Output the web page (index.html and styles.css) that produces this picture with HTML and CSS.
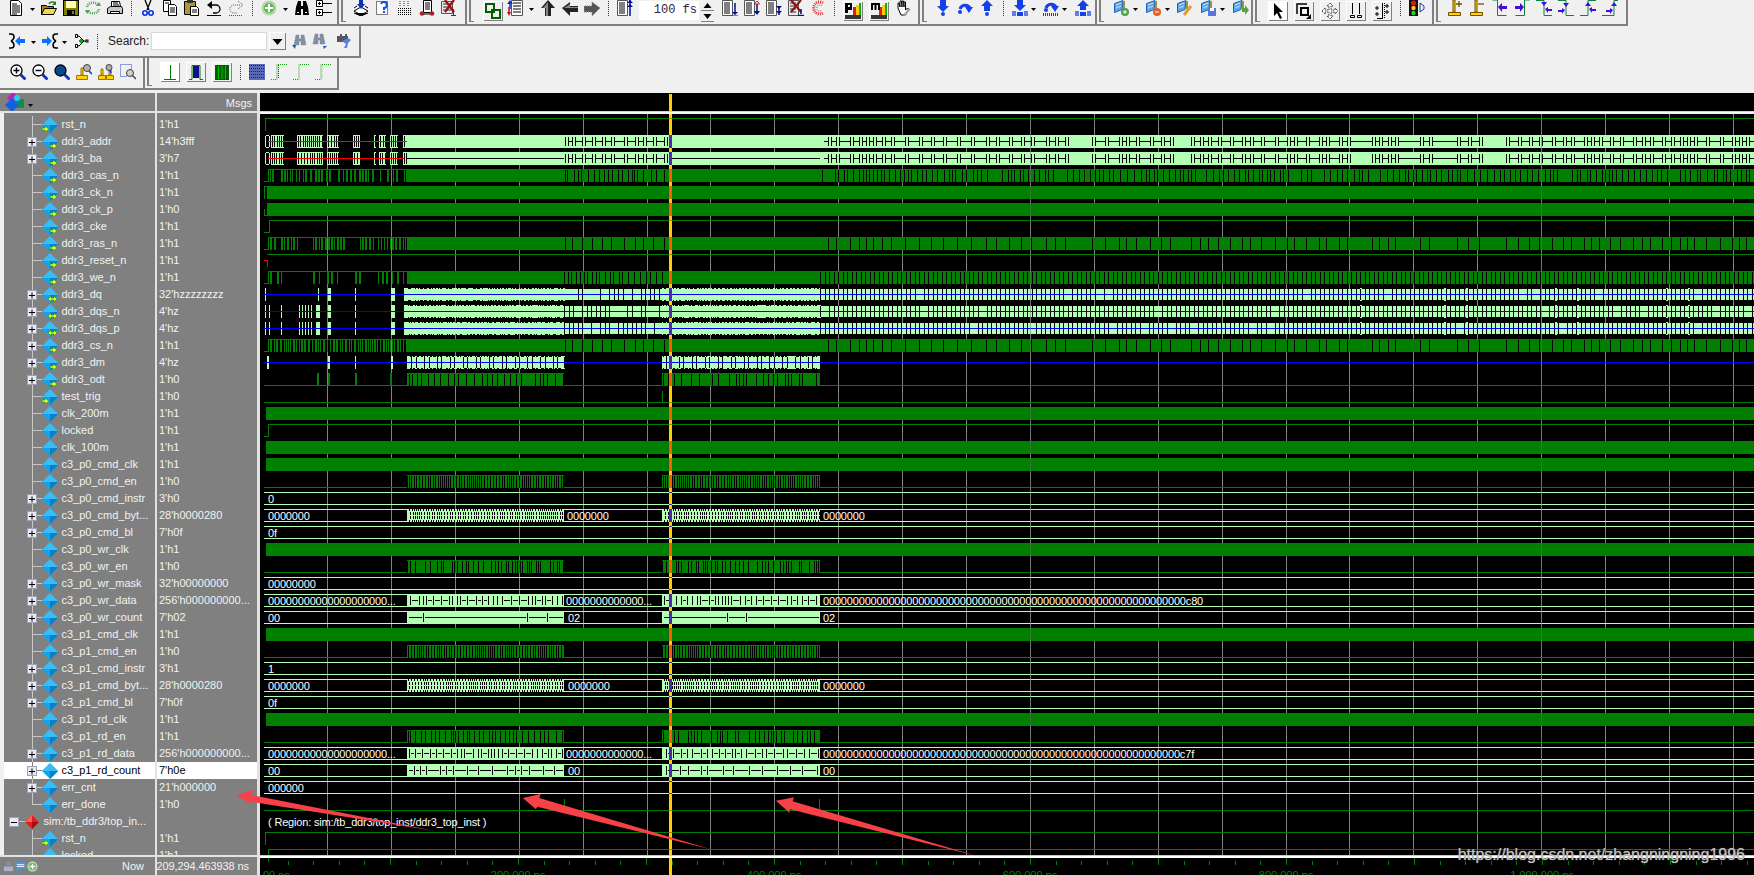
FILE: index.html
```html
<!DOCTYPE html>
<html lang="en">
<head>
<meta charset="utf-8">
<title>Wave</title>
<link rel="stylesheet" href="styles.css">
</head>
<body>
<svg class="defs" aria-hidden="true">
<defs>
<symbol id="doc" viewBox="0 0 16 16"><path fill="#fff" stroke="#000" d="M2.5.5h8l3 3v12h-11z"/><path stroke="#000" d="M4 4h5M4 6h8M4 8h8M4 10h8M4 12h8M4 14h5"/></symbol>
<symbol id="open" viewBox="0 0 16 16"><path fill="#a08a20" stroke="#000" d="M.5 14.5v-9h5l1 1h6v8z"/><path fill="#f0d850" stroke="#000" d="M.5 14.5l3-6h12l-3 6z"/><path fill="none" stroke="#208020" stroke-width="1.5" d="M8 4c1-2 4-3 6-1"/><path fill="#208020" d="M15 1v4h-4z"/></symbol>
<symbol id="save" viewBox="0 0 16 16"><rect x=".5" y=".5" width="15" height="15" fill="#808000" stroke="#000"/><rect x="3" y="1" width="10" height="7" fill="#ffffb0"/><rect x="4" y="10" width="8" height="5" fill="#000"/><rect x="9" y="11" width="2" height="3" fill="#808000"/></symbol>
<symbol id="reload" viewBox="0 0 16 16"><g fill="none" stroke="#5aa05a" stroke-width="2.5" stroke-dasharray="1 1"><path d="M2 7a6 5 0 0 1 11-2"/><path d="M14 9a6 5 0 0 1-11 2"/></g><path fill="#5aa05a" d="M11 6h5l-2-4zM5 10H0l2 4z"/></symbol>
<symbol id="print" viewBox="0 0 16 16"><path fill="#fff" stroke="#000" d="M4.5 1.5h8l1 5h-9z"/><path stroke="#000" d="M6 3h5M6 5h6"/><path fill="#c8c8c8" stroke="#000" d="M.5 8.5l3-2h11l1 2v5h-15z"/><path fill="#fff" stroke="#000" d="M3.5 11.5h9v2h-9z"/></symbol>
<symbol id="cut" viewBox="0 0 16 16"><path stroke="#000" stroke-width="1.3" d="M5 0l4 10M11 0L7 10"/><g fill="none" stroke="#1030e0" stroke-width="1.6"><circle cx="5" cy="13" r="2.2"/><circle cx="11" cy="13" r="2.2"/></g></symbol>
<symbol id="copy" viewBox="0 0 16 16"><path fill="#fff" stroke="#000" d="M1.5.5h7v11h-7z"/><path fill="#fff" stroke="#000" d="M6.5 4.5h6l2 2v9h-8z"/><path stroke="#000" d="M3 3h4M8 8h5M8 10h5M8 12h5"/></symbol>
<symbol id="paste" viewBox="0 0 16 16"><path fill="#b09830" stroke="#000" d="M.5 1.5h11v13H.5z"/><rect x="3" y="0" width="6" height="3" fill="#333"/><path fill="#fff" stroke="#000" d="M6.5 6.5h6l2 2v7h-8z"/><path stroke="#000" d="M8 10h5M8 12h5"/></symbol>
<symbol id="undo" viewBox="0 0 16 16"><path fill="none" stroke="#000" stroke-width="1.3" d="M4 5h6a4 4 0 0 1 0 8H7"/><path d="M6 1v8L1 5z"/><path stroke="#000" d="M1 15.500h14"/></symbol>
<symbol id="redo" viewBox="0 0 16 16"><g fill="none" stroke="#555" stroke-dasharray="1 1"><path d="M12 5H6a4 4 0 0 0 0 8h3"/><path d="M10 1l5 4-5 4M1 15.500h14"/></g></symbol>
<symbol id="add" viewBox="0 0 16 16"><circle cx="8" cy="8" r="7.500" fill="#b0d8a0"/><circle cx="8" cy="8" r="5" fill="#60b060"/><path stroke="#fff" stroke-width="2" d="M4 8h8M8 4v8"/></symbol>
<symbol id="bino" viewBox="0 0 16 16"><path d="M1 15l1-8 2-6h3v5h2V1h3l2 6 1 8H9V9H7v6z"/><path fill="#fff" d="M3 12h2v1H3zM11 12h2v1h-2z"/></symbol>
<symbol id="tree" viewBox="0 0 16 16"><path fill="#fff" stroke="#000" d="M.5.500h6v6h-6zM.5 9.500h6v6h-6z"/><path stroke="#000" d="M2 3.500h3M3.500 2v3M2 12.500h3M3.500 11v3M7 3.500h9M7 12.500h9"/></symbol>
<symbol id="stk" viewBox="0 0 16 16"><path fill="#fff" stroke="#000" d="M1 11l7-4 7 4-7 4zM1 8l3-2M15 8l-3-2"/><path stroke="#000" d="M1 13l7 3 7-3"/><path fill="#1030c0" d="M6 0h4v4h2l-4 5-4-5h2z"/></symbol>
<symbol id="qdoc" viewBox="0 0 16 16"><path fill="#fff" stroke="#000" stroke-dasharray="1 1" d="M1.500 1.500h11v13h-11z"/><path fill="none" stroke="#1050e0" stroke-width="2" d="M6 4a3 3 0 1 1 3 4v2M9 11v2"/></symbol>
<symbol id="grd" viewBox="0 0 16 16"><path stroke="#000" stroke-dasharray="1 1" d="M1 8.500h14M1 10.500h14M1 12.500h14M1 14.500h14"/><path fill="none" stroke="#1030c0" stroke-dasharray="1 1" d="M3 1v5M7 1v5M11 1v5"/></symbol>
<symbol id="cart" viewBox="0 0 16 16"><path fill="#fff" stroke="#000" d="M4.500.500h8v12h-8z"/><path stroke="#000" d="M6 3h5M6 5h5M6 7h5M6 9h5M3 14h10"/><circle cx="3" cy="13.500" r="2.300" fill="#b02020"/><circle cx="13" cy="13.500" r="2.300" fill="#b02020"/></symbol>
<symbol id="xdoc" viewBox="0 0 16 16"><path fill="#e8e8e8" stroke="#555" d="M.5 1.500h11v12H.5z"/><path stroke="#333" d="M2 4h8M2 7h8M2 10h8"/><path stroke="#a01010" stroke-width="2.300" d="M4 0l9 12M13 0L4 12"/><path stroke="#1030c0" d="M12.500 9v6M10 15.500h5"/></symbol>
<symbol id="link" viewBox="0 0 16 16"><g fill="none" stroke="#006000" stroke-width="2"><rect x="1" y="1" width="8" height="8"/><rect x="7" y="7" width="8" height="8"/></g></symbol>
<symbol id="rb" viewBox="0 0 16 16"><path fill="#fff" stroke="#555" d="M4.500.5h11v15h-11z"/><path stroke="#000" d="M6 3h8M6 6h8M6 9h8M6 12h8"/><path fill="none" stroke="#1030c0" stroke-width="1.500" d="M3 9V3"/><path fill="#1030c0" d="M0 4l3-4 3 4z"/><path fill="none" stroke="#c01010" stroke-width="1.500" d="M2 7v7"/><path fill="#c01010" d="M0 12h4l-2 4z"/></symbol>
<symbol id="aup" viewBox="0 0 16 16"><path fill="#222" d="M8 0l7 8h-4v8H5V8H1z"/><path fill="#888" d="M8 2L3 8h3v8h2z"/></symbol>
<symbol id="alf" viewBox="0 0 16 16"><path fill="#222" d="M0 8l8-6v4h8v6H8v4z"/><path fill="#888" d="M2 8l6-4v3h8v1z"/></symbol>
<symbol id="art" viewBox="0 0 16 16"><path fill="#555" stroke="#888" stroke-dasharray="1 1" d="M16 8L8 2v4H0v6h8v4z"/></symbol>
<symbol id="db" viewBox="0 0 16 16"><path fill="#fff" stroke="#555" d="M.5.5h10v15H.5z"/><path stroke="#000" d="M2 3h6M2 5h6M2 7h6M2 9h6M2 11h6M2 13h6"/><path stroke="#00108a" stroke-width="1.500" d="M13 0v16"/><path fill="#00108a" d="M10 3l3-3 3 3zM10 7l3-3 3 3z"/></symbol>
<symbol id="dd" viewBox="0 0 16 16"><path fill="#fff" stroke="#555" d="M.5.5h10v15H.5z"/><path stroke="#000" d="M2 3h6M2 5h6M2 7h6M2 9h6M2 11h6M2 13h6"/><path stroke="#00108a" stroke-width="1.500" d="M13 3v10"/><path fill="#00108a" d="M10 12h6l-3 3zM10 15.500h6v.5h-6z"/></symbol>
<symbol id="du" viewBox="0 0 16 16"><path fill="#fff" stroke="#555" d="M.5.5h10v15H.5z"/><path stroke="#000" d="M2 3h6M2 5h6M2 7h6M2 9h6M2 11h6M2 13h6"/><path stroke="#00108a" stroke-width="1.500" d="M13 4v9"/><path fill="#00108a" d="M10 11h6l-3 4z"/><path fill="#fff" stroke="#c02020" d="M10.500 4l2.500-3 2.500 3z"/></symbol>
<symbol id="dt" viewBox="0 0 16 16"><path fill="#fff" stroke="#555" d="M.5.5h10v15H.5z"/><path stroke="#000" d="M2 3h6M2 5h6M2 7h6M2 9h6M2 11h6M2 13h6"/><path stroke="#00108a" stroke-width="1.500" d="M13 6v9"/><path fill="#00108a" d="M10 6h6l-3 3zM10 11h6l-3 3z"/></symbol>
<symbol id="dx" viewBox="0 0 16 16"><path fill="#e8e8e8" stroke="#555" d="M.5.5h10v15H.5z"/><path stroke="#333" d="M2 3h6M2 6h6M2 9h6M2 12h6"/><path stroke="#901010" stroke-width="2" d="M3 0l10 12M13 0L3 12"/><path stroke="#00108a" stroke-width="1.500" d="M13 9v5M10 15.500h6"/></symbol>
<symbol id="cc" viewBox="0 0 16 16"><path fill="none" stroke="#e03030" stroke-width="3" stroke-dasharray="1 1" d="M13 3a6 6 0 1 0 0 10"/><path fill="none" stroke="#e03030" stroke-dasharray="1 1" d="M12 6a3 3 0 1 0 0 4"/></symbol>
<symbol id="pb" viewBox="0 0 16 16"><rect y="12" width="16" height="4" fill="#333"/><rect x="8" y="4" width="3" height="8" fill="#e02020"/><rect x="11" y="2" width="3" height="10" fill="#ffd000"/><rect x="14" y="0" width="2" height="12" fill="#10b010"/><path d="M0 0h7v7H3v3H0zM3 2v2h2V2z"/></symbol>
<symbol id="mb" viewBox="0 0 16 16"><rect y="12" width="16" height="4" fill="#333"/><rect x="8" y="4" width="3" height="8" fill="#e02020"/><rect x="11" y="2" width="3" height="10" fill="#ffd000"/><rect x="14" y="0" width="2" height="12" fill="#10b010"/><path d="M0 0h9v7H7V2H5.500v5h-2V2H2v5H0z"/></symbol>
<symbol id="hand" viewBox="0 0 16 16"><path fill="#fff" stroke="#000" d="M3 8V3h1l1 4V1h1.500l.5 6V1h1.500l.5 6V2h1.500v8l2-2 1 1-3 6H6z"/><path stroke="#9ab" stroke-width="2" d="M9 15l6-6"/></symbol>
<symbol id="sin" viewBox="0 0 16 16"><path fill="#1440e8" d="M5 0h6v6h3l-6 6-6-6h3z"/><circle cx="8" cy="14" r="2" fill="#1440e8"/></symbol>
<symbol id="sov" viewBox="0 0 16 16"><path fill="none" stroke="#1440e8" stroke-width="3" d="M3 9a5.500 5.500 0 0 1 10-1"/><path fill="#1440e8" d="M8 7h8l-4 6z"/><circle cx="3" cy="12" r="2" fill="#1440e8"/></symbol>
<symbol id="sou" viewBox="0 0 16 16"><path fill="#1440e8" d="M8 0l6 6h-3v5H5V6H2z"/><circle cx="8" cy="14" r="2" fill="#1440e8"/></symbol>
<symbol id="sinb" viewBox="0 0 16 16"><path fill="#1440e8" d="M5 0h6v5h3l-6 6-6-6h3z"/><path stroke="#1440e8" stroke-width="1.300" d="M1 11v5M3 11v5M13 11v5M15 11v5"/><circle cx="8" cy="14" r="2" fill="#1440e8"/><rect x="5" y="12" width="6" height="4" fill="#1440e8"/></symbol>
<symbol id="sovb" viewBox="0 0 16 16"><path fill="none" stroke="#1440e8" stroke-width="3" d="M3 8a5.500 5.500 0 0 1 10-1"/><path fill="#1440e8" d="M8 6h8l-4 6z"/><circle cx="3" cy="10" r="2" fill="#1440e8"/><path stroke="#1440e8" stroke-dasharray="1 1" stroke-width="3" d="M0 14.500h16"/></symbol>
<symbol id="soub" viewBox="0 0 16 16"><path fill="#1440e8" d="M8 0l6 6h-3v4H5V6H2z"/><path stroke="#1440e8" stroke-width="1.300" d="M1 11v5M3 11v5M13 11v5M15 11v5"/><rect x="5" y="12" width="6" height="4" fill="#1440e8"/></symbol>
<symbol id="wv" viewBox="0 0 16 16"><path fill="#58a8e8" stroke="#2060b0" d="M.5 3.500L9 .5l-1 9-7.500 3z"/><path stroke="#cde" d="M2 5l5-2M2 8l5-2"/><path stroke="#a09040" stroke-width="2" d="M10 1v8"/></symbol>
<symbol id="wadd" viewBox="0 0 16 16"><use href="#wv"/><circle cx="11" cy="12" r="4" fill="#50a050"/><path stroke="#fff" d="M9 12h4M11 10v4"/></symbol>
<symbol id="wdel" viewBox="0 0 16 16"><use href="#wv"/><circle cx="11" cy="12" r="4" fill="#e06020"/><path stroke="#fff" d="M9 12h4"/></symbol>
<symbol id="wed" viewBox="0 0 16 16"><use href="#wv"/><path stroke="#e0a030" stroke-width="3" d="M7 15l7-9"/></symbol>
<symbol id="wsv" viewBox="0 0 16 16"><use href="#wv"/><rect x="7" y="8" width="8" height="8" fill="#5878d8"/><rect x="9" y="8" width="4" height="3" fill="#fff"/></symbol>
<symbol id="wgo" viewBox="0 0 16 16"><use href="#wv"/><path fill="#58a040" d="M9 8h3V5l4 5-4 5v-3H9z"/></symbol>
<symbol id="ptr" viewBox="0 0 16 16"><path d="M4 0l9 9H9l3 6-2 1-3-6-3 3z"/></symbol>
<symbol id="zbx" viewBox="0 0 16 16"><path fill="none" stroke="#000" stroke-width="1.500" d="M1 11V1h10"/><rect x="5" y="5" width="7" height="7" fill="none" stroke="#000" stroke-width="2"/><path fill="#000" d="M15 11v5h-5z"/></symbol>
<symbol id="pan" viewBox="0 0 16 16"><path fill="#fff" stroke="#000" stroke-dasharray="1 1" d="M8 0l3 3H9v4h4V5l3 3-3 3V9H9v4h2l-3 3-3-3h2V9H3v2L0 8l3-3v2h4V3H5z"/></symbol>
<symbol id="mark" viewBox="0 0 16 16"><path stroke="#000" d="M4.500 0v11M11.500 0v11"/><path fill="none" stroke="#000" d="M2.500 12.500h4v2h-4zM9.500 12.500h4v2h-4z"/></symbol>
<symbol id="mks" viewBox="0 0 16 16"><path fill="none" stroke="#000" d="M8.500 0v15M3 15.500h6"/><path stroke="#000" d="M1 5h4M3 3v4M1 11h4M3 9v4M11 3h4M13 1v4M11 9h4M13 7v4"/><path stroke="#000" stroke-dasharray="1 1" d="M10.500 0v16"/></symbol>
<symbol id="tl" viewBox="0 0 16 16"><rect x="0" width="9" height="16" fill="#111"/><circle cx="4.500" cy="3" r="2.500" fill="#f01010"/><circle cx="4.500" cy="8" r="2.200" fill="#e8d020"/><circle cx="4.500" cy="13" r="2.200" fill="#20d020"/><path fill="none" stroke="#1040a0" d="M11 3v9l4-3v-3z"/></symbol>
<symbol id="fplus" viewBox="0 0 16 16"><path fill="#ffd400" stroke="#705000" d="M.5 12.500h12v3H.5zM5 0h2v12H5z"/><path stroke="#705000" stroke-width="1.300" d="M8 4h6M11 1v6"/></symbol>
<symbol id="fminus" viewBox="0 0 16 16"><path fill="#ffd400" stroke="#705000" d="M.5 12.500h12v3H.5zM5 0h2v12H5z"/><path stroke="#705000" stroke-width="1.300" d="M8 4h6"/></symbol>
<symbol id="el" viewBox="0 0 16 16"><path fill="none" stroke="#108040" d="M.5 0h5v15.500h9"/><path fill="#4010d0" d="M6 7l4-4v3h5v3h-5v3z"/></symbol>
<symbol id="er" viewBox="0 0 16 16"><path fill="none" stroke="#108040" d="M15.500 0h-5v15.500h-9"/><path fill="#4010d0" d="M10 7L6 3v3H1v3h5v3z"/></symbol>
<symbol id="ea" viewBox="0 0 16 16"><path fill="none" stroke="#108040" d="M0 .5h8v15h8"/><path fill="#4010d0" d="M5 2h6L8 6zM9 9l3-2v2h4v2h-4v2z"/></symbol>
<symbol id="eb" viewBox="0 0 16 16"><path fill="none" stroke="#108040" d="M0 .5h8v15h8"/><path fill="#4010d0" d="M5 3h6L8 7zM7 10L4 8v2H0v2h4v2z"/></symbol>
<symbol id="ec" viewBox="0 0 16 16"><path fill="none" stroke="#108040" d="M16 .5H8v15H0"/><path fill="#4010d0" d="M5 6h6L8 2zM9 9l3-2v2h4v2h-4v2z"/></symbol>
<symbol id="ed" viewBox="0 0 16 16"><path fill="none" stroke="#108040" d="M16 .5h-4v15H0"/><path fill="#4010d0" d="M9 6h6l-3-4zM11 10L8 8v2H4v2h4v2z"/></symbol>
<symbol id="mrgi" viewBox="0 0 16 16"><path fill="none" stroke="#000" stroke-width="1.500" d="M0 1h2c4 0 4 5 0 7M0 15h2c4 0 4-5 0-7"/><path fill="#0a70ff" d="M16 6H11V3L6 8l5 5v-3h5z"/></symbol>
<symbol id="mrgo" viewBox="0 0 16 16"><path fill="none" stroke="#000" stroke-width="1.500" d="M16 1h-2c-4 0-4 5 0 7M16 15h-2c-4 0-4-5 0-7"/><path fill="#0a70ff" d="M0 6h5V3l5 5-5 5v-3H0z"/></symbol>
<symbol id="gate" viewBox="0 0 16 16"><path fill="none" stroke="#000" d="M2.500 1.500h2v3h-2zM2.500 11.500h2v3h-2zM4 3h2l5 5-5 5H4M11 8h2"/><rect x="13" y="7" width="2" height="2" fill="none" stroke="#000"/><path stroke="#10a010" stroke-width="2" d="M6 8h4M8 6v4"/></symbol>
<symbol id="fnd" viewBox="0 0 16 16"><path fill="#8090a0" stroke="#8090a0" stroke-dasharray="1 1" d="M2 12l2-10h3v4h2V2h3l2 10H9V8H7v4z"/><path fill="#2050e0" d="M0 12l3 4 1-4zM1 13h2"/></symbol>
<symbol id="fnr" viewBox="0 0 16 16"><path fill="#8090a0" stroke="#8090a0" stroke-dasharray="1 1" d="M2 11l2-10h3v4h2V1h3l2 10H9V7H7v4z"/><path fill="#2050e0" d="M16 13l-3 3-1-3z"/></symbol>
<symbol id="opt" viewBox="0 0 16 16"><path fill="#556" d="M1 3h3V1h2v2h3V1h2v2h1v6H1z"/><path fill="#5880d8" d="M6 8l6-3 3 2-3 3-1 5H8l2-4z"/></symbol>
<symbol id="zin" viewBox="0 0 16 16"><circle cx="6.500" cy="6.500" r="5.500" fill="#fff" stroke="#000" stroke-width="1.300"/><path stroke="#000" stroke-width="1.500" d="M3.500 6.500h6M6.500 3.500v6"/><path stroke="#1030c0" stroke-width="2.800" d="M10.500 10.500l5 5"/></symbol>
<symbol id="zot" viewBox="0 0 16 16"><circle cx="6.500" cy="6.500" r="5.500" fill="#fff" stroke="#000" stroke-width="1.300"/><path stroke="#000" stroke-width="1.500" d="M3.500 6.500h6"/><path stroke="#1030c0" stroke-width="2.800" d="M10.500 10.500l5 5"/></symbol>
<symbol id="zfl" viewBox="0 0 16 16"><circle cx="6.500" cy="6.500" r="5.500" fill="#0b4a8a" stroke="#000" stroke-width="1.300"/><path stroke="#1030c0" stroke-width="2.800" d="M10.500 10.500l5 5"/></symbol>
<symbol id="zm1" viewBox="0 0 16 16"><path fill="#ffd400" stroke="#a07000" d="M.5 11.500h11v4H.5zM5 4h2v7H5z"/><circle cx="11" cy="4" r="3.500" fill="#b0b0b0" stroke="#444"/><path stroke="#1030c0" stroke-width="1.500" d="M13 7l3 3"/></symbol>
<symbol id="zm2" viewBox="0 0 16 16"><path fill="#ffd400" stroke="#a07000" d="M.5 11.500h7v4h-7zM8.500 11.500h7v4h-7zM3 5h2v6H3zM11 5h2v6h-2z"/><circle cx="11" cy="3.500" r="3" fill="#b0b0b0" stroke="#444"/><path stroke="#1030c0" stroke-width="1.500" d="M12 6l1 3"/></symbol>
<symbol id="zcur" viewBox="0 0 16 16"><path fill="none" stroke="#2050c0" stroke-dasharray="1 1" d="M.5.5h11v8H7v4H.5z"/><circle cx="10" cy="9" r="3.500" fill="#d0d0d0" stroke="#444"/><path stroke="#444" stroke-width="1.500" d="M12 11l4 4"/></symbol>
<symbol id="w1" viewBox="0 0 16 16"><path stroke="#008000" d="M8.500 1v14M2 15.500h12"/></symbol>
<symbol id="w2" viewBox="0 0 16 16"><path fill="#10108a" d="M5 2h6v12H5z"/><path fill="none" stroke="#008000" d="M1 15.500h3V1.500h8v14h3"/></symbol>
<symbol id="w3" viewBox="0 0 16 16"><path fill="#006000" d="M1 1h14v15H1z"/><path stroke="#00c000" d="M4.500 2v13M8 2v13M11.500 2v13"/></symbol>
<symbol id="w4" viewBox="0 0 16 16"><path fill="#5a6ab8" d="M0 0h16v16H0z"/><path stroke="#102070" stroke-dasharray="1 1" d="M0 1.500h16M0 4.500h16M0 7.500h16M0 10.500h16M0 13.500h16"/></symbol>
<symbol id="w5" viewBox="0 0 16 16"><path fill="none" stroke="#10a010" stroke-dasharray="1 1" d="M0 15.500h6v-15h10"/><path stroke="#e8d800" stroke-dasharray="1 1" d="M5.500 1v14"/><path stroke="#1030c0" stroke-dasharray="1 1" d="M7.500 1v14"/></symbol>
<symbol id="w6" viewBox="0 0 16 16"><path fill="none" stroke="#10a010" stroke-dasharray="1 1" d="M0 15.500h6v-15h10"/></symbol>
<symbol id="w7" viewBox="0 0 16 16"><path fill="none" stroke="#10a010" stroke-dasharray="1 1" d="M0 15.500h6v-15h10"/><path stroke="#e8d800" stroke-dasharray="1 1" d="M7.500 1v14"/></symbol>
<symbol id="plus" viewBox="0 0 10 10"><rect x=".5" y=".5" width="9" height="9" fill="#e6eaf6" stroke="#a0a0b4"/><path stroke="#000" d="M2 5.500h6M5 2.500v6"/></symbol>
<symbol id="minus" viewBox="0 0 10 10"><rect x=".5" y=".5" width="9" height="9" fill="#e6eaf6" stroke="#a0a0b4"/><path stroke="#000" d="M2 5.500h6"/></symbol>
<symbol id="d" viewBox="0 0 16 16"><path fill="#10a4ec" d="M8 0l8 8-8 8-8-8z"/><path fill="#5cd0ff" d="M8 0L0 8h16z" opacity=".55"/><path fill="#0880c8" d="M8 16l8-8H8z"/></symbol>
<symbol id="d-o" viewBox="0 0 16 16"><use href="#d"/><path fill="#e8ff30" stroke="#109010" stroke-width=".6" d="M8 11h3V9l4 3-4 3v-2H8z"/></symbol>
<symbol id="d-i" viewBox="0 0 16 16"><use href="#d"/><path fill="#e8ff30" stroke="#109010" stroke-width=".6" d="M0 11h3V9l4 3-4 3v-2H0z"/></symbol>
<symbol id="d-b" viewBox="0 0 16 16"><use href="#d"/><path fill="#e8ff30" stroke="#109010" stroke-width=".6" d="M6 12l3-3v2h3V9l3 3-3 3v-2H9v2z"/></symbol>
<symbol id="dr" viewBox="0 0 16 16"><path fill="#e02020" d="M8 1l7 7-7 7-7-7z"/><path fill="#ff6050" d="M8 1L1 8h7z"/><path fill="#a01010" d="M8 15l7-7H8z"/></symbol>
<symbol id="hdi" viewBox="0 0 20 20"><path fill="#c020c0" d="M6 0l6 6-6 6-6-6z" transform="translate(2 0)"/><rect x="10" y="7" width="9" height="9" fill="#109050"/><circle cx="12" cy="6" r="3" fill="#20d0f0"/><path fill="#1060e0" d="M7 6l7 7-7 7-7-7z"/></symbol>
<symbol id="care" viewBox="0 0 5 3"><path d="M0 0h5L2.500 3z"/></symbol>
<symbol id="ft1" viewBox="0 0 12 12"><path fill="#b0b0c0" d="M1 6h10v5H1z"/><circle cx="6" cy="3" r="3" fill="#8090a0"/></symbol>
<symbol id="ft2" viewBox="0 0 12 12"><path fill="#5890d0" d="M0 1h12v8H6l-3 3V9H0z"/><path stroke="#fff" d="M2 4h8M2 6h8"/></symbol>
</defs>
</svg>

<div class="toolrow r1">
  <div class="tb t1a">
    <svg class="i"><use href="#doc"/></svg><svg class="c"><use href="#care"/></svg>
    <svg class="i"><use href="#open"/></svg><svg class="i"><use href="#save"/></svg><svg class="i"><use href="#reload"/></svg><svg class="i"><use href="#print"/></svg>
    <span class="sp"></span>
    <svg class="i"><use href="#cut"/></svg><svg class="i"><use href="#copy"/></svg><svg class="i"><use href="#paste"/></svg><svg class="i"><use href="#undo"/></svg><svg class="i"><use href="#redo"/></svg>
    <span class="sp"></span>
    <svg class="i"><use href="#add"/></svg><svg class="c"><use href="#care"/></svg><svg class="i"><use href="#bino"/></svg><svg class="i"><use href="#tree"/></svg>
  </div>
  <div class="tb h t1b">
    <svg class="i"><use href="#stk"/></svg><svg class="i"><use href="#qdoc"/></svg><svg class="i"><use href="#grd"/></svg><svg class="i"><use href="#cart"/></svg><svg class="i"><use href="#xdoc"/></svg>
  </div>
  <div class="tb h t1c">
    <svg class="i p"><use href="#link"/></svg><svg class="i"><use href="#rb"/></svg><svg class="c"><use href="#care"/></svg>
    <svg class="i"><use href="#aup"/></svg><svg class="i"><use href="#alf"/></svg><svg class="i"><use href="#art"/></svg>
    <span class="sp"></span>
    <svg class="i"><use href="#db"/></svg>
    <span class="spin">100 fs</span>
    <svg class="spb" viewBox="0 0 13 22"><path d="M6.500 3l4 5h-8zM2.500 14h8l-4 5z"/><path stroke="#808080" d="M0 10.500h13M0 21.500h13"/></svg>
    <svg class="i ml2"><use href="#dd"/></svg><svg class="i"><use href="#du"/></svg><svg class="i"><use href="#dt"/></svg><svg class="i"><use href="#dx"/></svg><svg class="i"><use href="#cc"/></svg>
    <span class="sp"></span>
    <svg class="i bt"><use href="#pb"/></svg><svg class="i bt"><use href="#mb"/></svg><svg class="i"><use href="#hand"/></svg>
  </div>
  <div class="tb h t1d">
    <svg class="i"><use href="#sin"/></svg><svg class="i"><use href="#sov"/></svg><svg class="i"><use href="#sou"/></svg>
    <span class="sp"></span>
    <svg class="i"><use href="#sinb"/></svg><svg class="c c2"><use href="#care"/></svg><svg class="i"><use href="#sovb"/></svg><svg class="c c2"><use href="#care"/></svg><svg class="i"><use href="#soub"/></svg>
  </div>
  <div class="tb h t1e">
    <svg class="i"><use href="#wadd"/></svg><svg class="c c2"><use href="#care"/></svg><svg class="i"><use href="#wdel"/></svg><svg class="c c2"><use href="#care"/></svg><svg class="i"><use href="#wed"/></svg>
    <svg class="i ml2"><use href="#wsv"/></svg><svg class="c c2"><use href="#care"/></svg><svg class="i"><use href="#wgo"/></svg>
  </div>
  <div class="tb h t1f">
    <svg class="i bt on"><use href="#ptr"/></svg><svg class="i bt"><use href="#zbx"/></svg><svg class="i bt"><use href="#pan"/></svg><svg class="i bt"><use href="#mark"/></svg><svg class="i bt"><use href="#mks"/></svg>
    <span class="sp"></span>
    <svg class="i"><use href="#tl"/></svg>
  </div>
  <div class="tb h t1g">
    <svg class="i"><use href="#fplus"/></svg><svg class="i"><use href="#fminus"/></svg><svg class="i"><use href="#el"/></svg><svg class="i"><use href="#er"/></svg><svg class="i"><use href="#ea"/></svg><svg class="i"><use href="#eb"/></svg><svg class="i"><use href="#ec"/></svg><svg class="i"><use href="#ed"/></svg>
  </div>
</div>

<div class="toolrow r2">
  <div class="tb t2a">
    <svg class="i"><use href="#mrgi"/></svg><svg class="c"><use href="#care"/></svg>
    <svg class="i"><use href="#mrgo"/></svg><svg class="c cx"><use href="#care"/></svg>
    <svg class="i"><use href="#gate"/></svg>
    <span class="sp"></span>
    <span class="lab">Search:</span>
    <span class="srch"></span>
    <span class="drop"><svg class="c"><use href="#care"/></svg></span>
    <svg class="i"><use href="#fnd"/></svg><svg class="i mn3"><use href="#fnr"/></svg><svg class="i ml3"><use href="#opt"/></svg>
  </div>
</div>

<div class="toolrow r3">
  <div class="tb t3a">
    <svg class="i"><use href="#zin"/></svg><svg class="i"><use href="#zot"/></svg><svg class="i"><use href="#zfl"/></svg><svg class="i"><use href="#zm1"/></svg><svg class="i"><use href="#zm2"/></svg><svg class="i"><use href="#zcur"/></svg>
  </div>
  <div class="tb h t3b">
    <svg class="i bt on"><use href="#w1"/></svg><svg class="i bt"><use href="#w2"/></svg><svg class="i bt"><use href="#w3"/></svg>
    <span class="sp"></span>
    <svg class="i"><use href="#w4"/></svg><svg class="i"><use href="#w5"/></svg><svg class="i"><use href="#w6"/></svg><svg class="i"><use href="#w7"/></svg>
  </div>
</div>

<main class="win">
  <div class="hd-name"><svg class="hdi"><use href="#hdi"/></svg><svg class="c"><use href="#care"/></svg></div>
  <div class="hd-val">Msgs</div>
  <svg id="wavepane" class="wave" viewBox="260 93 1494 782"></svg>

  <div class="names">
    <div class="row"><span class="tw"></span><svg class="sg"><use href="#d-i"/></svg><span class="nm">rst_n</span></div>
    <div class="row"><span class="tw"><svg class="pm"><use href="#plus"/></svg></span><svg class="sg"><use href="#d-o"/></svg><span class="nm">ddr3_addr</span></div>
    <div class="row"><span class="tw"><svg class="pm"><use href="#plus"/></svg></span><svg class="sg"><use href="#d-o"/></svg><span class="nm">ddr3_ba</span></div>
    <div class="row"><span class="tw"></span><svg class="sg"><use href="#d-o"/></svg><span class="nm">ddr3_cas_n</span></div>
    <div class="row"><span class="tw"></span><svg class="sg"><use href="#d-o"/></svg><span class="nm">ddr3_ck_n</span></div>
    <div class="row"><span class="tw"></span><svg class="sg"><use href="#d-o"/></svg><span class="nm">ddr3_ck_p</span></div>
    <div class="row"><span class="tw"></span><svg class="sg"><use href="#d-o"/></svg><span class="nm">ddr3_cke</span></div>
    <div class="row"><span class="tw"></span><svg class="sg"><use href="#d-o"/></svg><span class="nm">ddr3_ras_n</span></div>
    <div class="row"><span class="tw"></span><svg class="sg"><use href="#d-o"/></svg><span class="nm">ddr3_reset_n</span></div>
    <div class="row"><span class="tw"></span><svg class="sg"><use href="#d-o"/></svg><span class="nm">ddr3_we_n</span></div>
    <div class="row"><span class="tw"><svg class="pm"><use href="#plus"/></svg></span><svg class="sg"><use href="#d-b"/></svg><span class="nm">ddr3_dq</span></div>
    <div class="row"><span class="tw"><svg class="pm"><use href="#plus"/></svg></span><svg class="sg"><use href="#d-b"/></svg><span class="nm">ddr3_dqs_n</span></div>
    <div class="row"><span class="tw"><svg class="pm"><use href="#plus"/></svg></span><svg class="sg"><use href="#d-b"/></svg><span class="nm">ddr3_dqs_p</span></div>
    <div class="row"><span class="tw"><svg class="pm"><use href="#plus"/></svg></span><svg class="sg"><use href="#d-o"/></svg><span class="nm">ddr3_cs_n</span></div>
    <div class="row"><span class="tw"><svg class="pm"><use href="#plus"/></svg></span><svg class="sg"><use href="#d-o"/></svg><span class="nm">ddr3_dm</span></div>
    <div class="row"><span class="tw"><svg class="pm"><use href="#plus"/></svg></span><svg class="sg"><use href="#d-o"/></svg><span class="nm">ddr3_odt</span></div>
    <div class="row"><span class="tw"></span><svg class="sg"><use href="#d-i"/></svg><span class="nm">test_trig</span></div>
    <div class="row"><span class="tw"></span><svg class="sg"><use href="#d"/></svg><span class="nm">clk_200m</span></div>
    <div class="row"><span class="tw"></span><svg class="sg"><use href="#d"/></svg><span class="nm">locked</span></div>
    <div class="row"><span class="tw"></span><svg class="sg"><use href="#d"/></svg><span class="nm">clk_100m</span></div>
    <div class="row"><span class="tw"></span><svg class="sg"><use href="#d"/></svg><span class="nm">c3_p0_cmd_clk</span></div>
    <div class="row"><span class="tw"></span><svg class="sg"><use href="#d"/></svg><span class="nm">c3_p0_cmd_en</span></div>
    <div class="row"><span class="tw"><svg class="pm"><use href="#plus"/></svg></span><svg class="sg"><use href="#d"/></svg><span class="nm">c3_p0_cmd_instr</span></div>
    <div class="row"><span class="tw"><svg class="pm"><use href="#plus"/></svg></span><svg class="sg"><use href="#d"/></svg><span class="nm">c3_p0_cmd_byt...</span></div>
    <div class="row"><span class="tw"><svg class="pm"><use href="#plus"/></svg></span><svg class="sg"><use href="#d"/></svg><span class="nm">c3_p0_cmd_bl</span></div>
    <div class="row"><span class="tw"></span><svg class="sg"><use href="#d"/></svg><span class="nm">c3_p0_wr_clk</span></div>
    <div class="row"><span class="tw"></span><svg class="sg"><use href="#d"/></svg><span class="nm">c3_p0_wr_en</span></div>
    <div class="row"><span class="tw"><svg class="pm"><use href="#plus"/></svg></span><svg class="sg"><use href="#d"/></svg><span class="nm">c3_p0_wr_mask</span></div>
    <div class="row"><span class="tw"><svg class="pm"><use href="#plus"/></svg></span><svg class="sg"><use href="#d"/></svg><span class="nm">c3_p0_wr_data</span></div>
    <div class="row"><span class="tw"><svg class="pm"><use href="#plus"/></svg></span><svg class="sg"><use href="#d"/></svg><span class="nm">c3_p0_wr_count</span></div>
    <div class="row"><span class="tw"></span><svg class="sg"><use href="#d"/></svg><span class="nm">c3_p1_cmd_clk</span></div>
    <div class="row"><span class="tw"></span><svg class="sg"><use href="#d"/></svg><span class="nm">c3_p1_cmd_en</span></div>
    <div class="row"><span class="tw"><svg class="pm"><use href="#plus"/></svg></span><svg class="sg"><use href="#d"/></svg><span class="nm">c3_p1_cmd_instr</span></div>
    <div class="row"><span class="tw"><svg class="pm"><use href="#plus"/></svg></span><svg class="sg"><use href="#d"/></svg><span class="nm">c3_p1_cmd_byt...</span></div>
    <div class="row"><span class="tw"><svg class="pm"><use href="#plus"/></svg></span><svg class="sg"><use href="#d"/></svg><span class="nm">c3_p1_cmd_bl</span></div>
    <div class="row"><span class="tw"></span><svg class="sg"><use href="#d"/></svg><span class="nm">c3_p1_rd_clk</span></div>
    <div class="row"><span class="tw"></span><svg class="sg"><use href="#d"/></svg><span class="nm">c3_p1_rd_en</span></div>
    <div class="row"><span class="tw"><svg class="pm"><use href="#plus"/></svg></span><svg class="sg"><use href="#d"/></svg><span class="nm">c3_p1_rd_data</span></div>
    <div class="row sel"><span class="tw"><svg class="pm"><use href="#plus"/></svg></span><svg class="sg"><use href="#d"/></svg><span class="nm">c3_p1_rd_count</span></div>
    <div class="row"><span class="tw"><svg class="pm"><use href="#plus"/></svg></span><svg class="sg"><use href="#d"/></svg><span class="nm">err_cnt</span></div>
    <div class="row last"><span class="tw"></span><svg class="sg"><use href="#d"/></svg><span class="nm">err_done</span></div>
    <div class="row top"><span class="tw"><svg class="pm"><use href="#minus"/></svg><svg class="sg"><use href="#dr"/></svg></span><span class="nm">sim:/tb_ddr3/top_in...</span></div>
    <div class="row"><span class="tw"></span><svg class="sg"><use href="#d-i"/></svg><span class="nm">rst_n</span></div>
    <div class="row"><span class="tw"></span><svg class="sg"><use href="#d"/></svg><span class="nm">locked</span></div>
  </div>

  <div class="vals">
    <div class="v">1'h1</div><div class="v">14'h3fff</div><div class="v">3'h7</div><div class="v">1'h1</div><div class="v">1'h1</div><div class="v">1'h0</div><div class="v">1'h1</div><div class="v">1'h1</div><div class="v">1'h1</div><div class="v">1'h1</div>
    <div class="v">32'hzzzzzzzz</div><div class="v">4'hz</div><div class="v">4'hz</div><div class="v">1'h1</div><div class="v">4'hz</div><div class="v">1'h0</div><div class="v">1'h0</div><div class="v">1'h1</div><div class="v">1'h1</div><div class="v">1'h1</div>
    <div class="v">1'h1</div><div class="v">1'h0</div><div class="v">3'h0</div><div class="v">28'h0000280</div><div class="v">7'h0f</div><div class="v">1'h1</div><div class="v">1'h0</div><div class="v">32'h00000000</div><div class="v">256'h000000000...</div><div class="v">7'h02</div>
    <div class="v">1'h1</div><div class="v">1'h0</div><div class="v">3'h1</div><div class="v">28'h0000280</div><div class="v">7'h0f</div><div class="v">1'h1</div><div class="v">1'h1</div><div class="v">256'h000000000...</div><div class="v sel">7'h0e</div><div class="v">21'h000000</div>
    <div class="v">1'h0</div><div class="v">&nbsp;</div><div class="v">1'h1</div><div class="v">1'h1</div>
  </div>

  <div class="ft-name">
    <svg class="fi"><use href="#ft1"/></svg><svg class="fi"><use href="#ft2"/></svg><svg class="fi"><use href="#add"/></svg>
    <span class="now">Now</span>
  </div>
  <div class="ft-val"><span>209,294.463938 ns</span></div>
</main>

<svg class="arrows" viewBox="0 0 1754 875" aria-hidden="true">
  <path d="M236.700 795L253.300 790L251.700 795L435 831L250.700 801.700L250.700 804.300Z"/>
  <path d="M522.700 798L540.700 794L539.300 798L710.700 849.300L537.300 806.700L536 809.300Z"/>
  <path d="M776 800.700L794 797.300L792.700 801.300L976.700 856L790 809.300L789.300 812.700Z"/>
</svg>
<div class="mark">https://blog.csdn.net/zhangningning1996</div>
<script src="wave.js"></script>
</body>
</html>
```
FILE: styles.css
```css
html, body { margin: 0; padding: 0; width: 1754px; height: 875px; overflow: hidden; background: #f0f0f0; }
body { position: relative; font-family: "Liberation Sans", Arial, sans-serif; font-size: 11px; }
.defs { position: absolute; width: 0; height: 0; }

.toolrow { display: flex; align-items: stretch; box-sizing: border-box; }
.r1 { height: 26px; }
.r2 { height: 32px; }
.r3 { height: 32px; }

.tb { display: flex; align-items: flex-start; gap: 6px; box-sizing: border-box; flex: none;
  border-right: 2px solid #808080; border-bottom: 2px solid #808080; }
.tb.h { background:
  linear-gradient(#808080, #808080) 2px 0 / 2px calc(100% - 3px) no-repeat,
  linear-gradient(#808080, #808080) 2px calc(100% - 2px) / 5px 1px no-repeat; }

.t1a { width: 339px; padding-left: 8px; }
.t1b { width: 128px; padding-left: 14px; }
.t1c { width: 453px; padding-left: 18px; }
.t1d { width: 177px; padding-left: 14.5px; }
.t1e { width: 156px; padding-left: 17px; }
.t1f { width: 181px; padding-left: 15px; }
.t1g { width: 194px; padding-left: 14px; }
.r2 .tb { padding-top: 7px; }
.t2a { width: 361px; padding-left: 9px; }
.r3 .tb { padding-top: 6px; }
.t3a { width: 145px; padding-left: 10px; }
.t3b { width: 194px; padding-left: 14.5px; }

.i { width: 16px; height: 16px; flex: none; display: block; }
.c { width: 5px; height: 3px; flex: none; margin-top: 8px; display: block; }
.c2 { margin-left: -3px; margin-right: 1.5px; }
.cx { margin-left: -2px; }
.ml2 { margin-left: 2px; }
.ml3 { margin-left: 3px; }
.mn3 { margin-left: -3px; }
.sp { width: 1px; height: 16px; margin: 1px 2px 0; flex: none;
  background: repeating-linear-gradient(#333 0 1px, transparent 1px 2px); }

.p, .bt { box-sizing: content-box; padding: 2px; background: #f0f0f0;
  box-shadow: inset 1px 1px #fff, inset -1px -1px #808080; }
.p { margin: 1px -2px 0; }
.bt { margin-top: 1px; }
.on { background: #fff; }
.r3 .bt { margin-top: -2px; }

.spin { width: 60px; height: 19px; margin-top: 1px; box-sizing: border-box; background: #fff;
  font: 12px/18px "Liberation Mono", monospace; text-align: right; padding-right: 2px; color: #302040; flex: none; }
.spb { width: 13px; height: 22px; margin-left: -4px; flex: none; }

.lab { font-size: 12px; line-height: 16px; color: #222; margin-left: 2px; width: 37px; white-space: nowrap; }
.srch { width: 116px; height: 18px; margin-top: -1px; background: #fff; flex: none; box-sizing: border-box;
  border: 1px solid #d8d8d8; }
.drop { width: 17px; height: 18px; margin: -1px 0 0 -4px; background: #f0f0f0; flex: none; box-sizing: border-box;
  box-shadow: inset 1px 1px #fff, inset -1px -1px #808080; display: flex; align-items: center; justify-content: center; }
.drop .c { width: 11px; height: 6px; margin: 2px 0 0; }

.win { display: grid; grid-template-columns: 155px 100px 1fr; grid-template-rows: 18px 742px 18px;
  row-gap: 2px; column-gap: 2px; width: 1754px; height: 782px; margin-top: 3px; background: #e2e2e2; color: #f2f2f2; }
.wave { grid-column: 3; grid-row: 1 / 4; width: 1494px; height: 782px; margin-left: 1px; display: block; background: #000; }
.wave text { font-size: 11px; font-family: "Liberation Sans", Arial, sans-serif; fill: #fff; letter-spacing: -.17px; }
.wave text.ax { fill: #008000; letter-spacing: 0; }
.wave path { shape-rendering: crispEdges; }

.hd-name, .hd-val, .ft-name, .ft-val, .names, .vals { background: #808080; overflow: hidden; }
.hd-name { grid-column: 1; grid-row: 1; display: flex; align-items: center; gap: 3px; padding-left: 5px; }
.hdi { width: 20px; height: 20px; flex: none; }
.hd-name .c { margin-top: 6px; }
.hd-val { grid-column: 2; grid-row: 1; text-align: right; padding-right: 5px; line-height: 20px; }

.names { grid-column: 1; grid-row: 2; border-left: 4px solid #f0f0f0; padding-top: 3px; }
.vals { grid-column: 2; grid-row: 2; padding-top: 3px; }
.row { display: flex; align-items: center; height: 17px; }
.row.sel { background: #fff; color: #000; }
.tw { width: 38px; height: 17px; flex: none; display: flex; align-items: center; padding-left: 23px; box-sizing: border-box;
  background:
    linear-gradient(#c8c8c8, #c8c8c8) 28px 0 / 1px 100% no-repeat,
    linear-gradient(#c8c8c8, #c8c8c8) 28px 8px / 10px 1px no-repeat; }
.sel .tw { background:
    linear-gradient(#808080, #808080) 28px 0 / 1px 100% no-repeat,
    linear-gradient(#808080, #808080) 28px 8px / 10px 1px no-repeat; }
.last .tw { background:
    linear-gradient(#c8c8c8, #c8c8c8) 28px 0 / 1px 9px no-repeat,
    linear-gradient(#c8c8c8, #c8c8c8) 28px 8px / 10px 1px no-repeat; }
.pm { width: 10px; height: 10px; flex: none; }
.sg { width: 16px; height: 16px; flex: none; }
.nm { margin-left: 3.500px; margin-top: -2px; white-space: nowrap; }
.top .tw { padding-left: 5px; gap: 5px; background: linear-gradient(#c8c8c8, #c8c8c8) 10px 8px / 12px 1px no-repeat; }
.top .nm { margin-left: 1.500px; }
.v { height: 17px; line-height: 17px; padding-left: 2px; white-space: nowrap; }
.v.sel { background: #fff; color: #000; }

.ft-name { grid-column: 1; grid-row: 3; display: flex; align-items: center; gap: 1px; padding-left: 3px; }
.fi { width: 11px; height: 11px; flex: none; }
.now { margin-left: auto; margin-right: 11px; }
.ft-val { grid-column: 2; grid-row: 3; display: flex; justify-content: flex-end; padding-right: 8px; white-space: nowrap; line-height: 18px; letter-spacing: -.1px; }

.arrows { position: absolute; left: 0; top: 0; width: 1754px; height: 875px; pointer-events: none; fill: #f84048; }
.mark { position: absolute; right: 9px; top: 844px; font-size: 16px; line-height: 22px; color: #c0c0c0; white-space: nowrap; text-shadow: 0 0 1px #8a8a8a; }
```
FILE: wave.js
```js
(function () {
  var svg = document.getElementById('wavepane');
  var order = ['grid', 'dark', 'bright', 'notch', 'z', 'red', 'over'];
  var colors = { grid: '#808080', dark: '#007f00', bright: '#b3ffb3', notch: '#000', z: '#0000ff', red: '#ff0000', over: '#6c6c6c' };
  var L = {};
  order.forEach(function (k) { L[k] = ''; });
  var texts = '';
  var A0 = 407, A1 = 564, B0 = 662, B1 = 820, S = 264, E = 1754;

  function rect(l, x, y, w, h) { if (w > 0 && h > 0) L[l] += 'M' + x + ' ' + y + 'h' + w + 'v' + h + 'h' + (-w) + 'z'; }
  function HI(i) { return 118 + 17 * i; }
  function rng(seed) {
    var a = seed * 2654435761 >>> 0;
    return function () {
      a = (a + 0x6D2B79F5) >>> 0;
      var t = a;
      t = Math.imul(t ^ (t >>> 15), t | 1);
      t ^= t + Math.imul(t ^ (t >>> 7), t | 61);
      return ((t ^ (t >>> 14)) >>> 0) / 4294967296;
    };
  }
  function trans(seed, x0, x1, pmin, pmax, solidP, solidLen) {
    var r = rng(seed), out = [], x = x0 + Math.floor(r() * pmin);
    while (x < x1) {
      out.push(x);
      var p = pmin + Math.floor(r() * (pmax - pmin + 1));
      if (solidP && r() < solidP) p += solidLen;
      x += p;
    }
    return out;
  }
  function regular(x0, x1, p) {
    var out = [];
    for (var x = x0; x < x1; x += p) out.push(Math.round(x));
    return out;
  }
  function band(i, x0, x1) { rect('dark', x0, HI(i), x1 - x0, 13); }
  function gaps(i, list) { list.forEach(function (x) { rect('notch', x, HI(i) + 1, 1, 12); }); }
  function hi(i, x0, x1) { rect('dark', x0, HI(i), x1 - x0, 1); }
  function lo(i, x0, x1) { rect('dark', x0, HI(i) + 12, x1 - x0, 1); }
  function rise(i, x) { rect('dark', x, HI(i), 1, 13); }
  function bars(i, ranges, pmin, pmax, seed) {
    var r = rng(seed);
    ranges.forEach(function (g) {
      var x = g[0];
      while (x < g[1]) {
        var w = 1 + Math.floor(r() * 2);
        rect('dark', x, HI(i), w, 13);
        x += w + pmin + Math.floor(r() * (pmax - pmin + 1));
      }
    });
  }

  for (var gx = 0; gx < 23; gx++) rect('grid', Math.round(327 + 63.9 * gx), 114, 1, 741);

  var cmdAfter = trans(11, 822, E, 7, 15, 0.1, 14);
  var cmdMid = trans(12, 564, 668, 5, 14);

  function cmdRow(i, pre, pmin, pmax, seed, mid, after) {
    lo(i, S, 268); rise(i, 268); hi(i, 268, A0);
    bars(i, pre, pmin, pmax, seed);
    band(i, A0, E);
    gaps(i, mid);
    gaps(i, after);
  }
  cmdRow(3, [[270, 275], [281, 330], [338, 373], [380, 384], [387, 389], [393, 398], [404, 407]], 1, 3, 21,
    trans(31, 564, 668, 2, 8), trans(32, 820, E, 3, 7, 0.06, 8));
  cmdRow(7, [[270, 277], [281, 298], [313, 329], [331, 345], [360, 375], [378, 389], [390, 407]], 1, 2, 22, cmdMid, cmdAfter);
  cmdRow(9, [[270, 284], [313, 323], [327, 338], [355, 360], [378, 390], [392, 404]], 2, 5, 23,
    trans(33, 564, 668, 3, 6), regular(820, E, 4.5));
  cmdRow(13, [[270, 407]], 1, 2, 24, cmdMid, cmdAfter);

  rise(0, 265); hi(0, 265, E);
  rise(6, 269); lo(6, S, 269); hi(6, 269, E);
  rect('red', 264, 260, 3, 1); rect('dark', 267, 260, 1, 7); hi(8, 267, E);
  rect('dark', 265, HI(4), 2, 1); rect('dark', 264, HI(4), 1, 13); band(4, 267, E);
  lo(5, 264, 267); rect('dark', 264, HI(5) + 6, 1, 6); band(5, 267, E);
  [17, 19, 20, 25, 30, 35].forEach(function (i) { band(i, 266, E); });
  lo(18, 264, 268); rise(18, 268); hi(18, 268, E);
  lo(16, 264, E); rect('dark', 662, HI(16) + 1, 1, 12);
  lo(40, 264, E); rect('dark', 564, HI(40) + 1, 1, 12); rect('dark', 819, HI(40) + 1, 1, 12);
  rise(42, 265); hi(42, 265, E);
  rect('dark', 268, HI(43), 1, 13); hi(43, 268, E);

  function enRow(i, seed, pmin, pmax, solidP, solidLen) {
    lo(i, 264, E);
    band(i, A0, A1);
    band(i, B0, B1);
    gaps(i, trans(seed, A0, A1, pmin, pmax, solidP, solidLen));
    gaps(i, trans(seed + 1, B0, B1, pmin, pmax, solidP, solidLen));
  }
  enRow(15, 41, 3, 8, 0.1, 6);
  [317, 328, 355, 390].forEach(function (x) { rect('dark', x, HI(15), 2, 13); });
  enRow(21, 43, 2, 3);
  enRow(26, 45, 2, 5, 0.1, 5);
  enRow(31, 47, 2, 3);
  enRow(36, 49, 2, 6, 0.12, 5);

  function busyBand(i, x0, x1) { rect('bright', x0, HI(i), x1 - x0, 13); }
  function ticks(i, list, tickH) {
    var c = HI(i) + 6;
    list.forEach(function (t) {
      rect('notch', t, c - tickH, 1, 2 * tickH + 1);
      rect('notch', t + 3, c - tickH, 1, 2 * tickH + 1);
    });
  }
  function centre(i, list, x0, x1, seed) {
    var r = rng(seed), c = HI(i) + 6, prev = x0;
    list.concat([x1]).forEach(function (t) {
      if (t - prev > 6 && !(t - prev > 20 && r() < 0.5)) rect('notch', prev + 4, c, t - prev - 4, 1);
      prev = t;
    });
  }
  function addrRow(i, redEnd, seed) {
    var h = HI(i), preRanges = [[271, 284], [297, 323], [327, 339], [353, 360], [374, 376], [379, 386], [390, 398], [403, 407]];
    rect('bright', 265, h + 1, 1, 11); rect('bright', 269, h + 1, 1, 11);
    rect('bright', 266, h, 3, 1); rect('bright', 266, h + 12, 3, 1);
    preRanges.forEach(function (g) { busyBand(i, g[0], g[1]); });
    var r = rng(seed);
    preRanges.forEach(function (g) {
      for (var x = g[0] + 1; x < g[1]; x += 2 + (r() < 0.3 ? 1 : 0)) rect('notch', x, h + 1, 1, 11);
    });
    rect('red', 268, h + 6, redEnd - 268, 1);
    busyBand(i, A0, E);
    ticks(i, cmdMid, 4);
    ticks(i, cmdAfter, 4);
    if (i === 2) { rect('notch', A0, h + 6, 157, 1); rect('notch', 672, h + 6, 148, 1); }
    centre(i, cmdMid, 564, 662, seed);
    centre(i, cmdAfter, 820, E, seed + 1);
  }
  addrRow(1, 407, 51);
  addrRow(2, 404, 53);

  function teeth(i, x0, x1, seed) {
    var h = HI(i), r = rng(seed);
    rect('bright', x0, h + 1, x1 - x0, 11);
    for (var x = x0; x < x1; x += 2 + Math.floor(r() * 3)) {
      var w = 1 + Math.floor(r() * 2);
      rect('bright', x, h, w, 1);
      rect('bright', x, h + 12, w, 1);
    }
  }
  function blocks(i, x0, x1, pitch, seed, wide) {
    var h = HI(i), r = rng(seed);
    rect('bright', x0, h + 1, x1 - x0, 11);
    regular(x0, x1, pitch).forEach(function (x) {
      if (!(wide && r() < wide)) rect('notch', x, h + 1, 1, 11);
    });
  }
  function marks(i, list) {
    list.forEach(function (g) { rect('bright', g[0], HI(i), g[1] - g[0], 13); });
  }
  function dataRow(i, seed, pre) {
    rect('z', 264, HI(i) + 6, E - 264, 1);
    marks(i, pre);
    teeth(i, A0, A1, seed);
    blocks(i, A1, B0, 4.5, seed + 1, 0.25);
    teeth(i, B0, B1, seed + 2);
    blocks(i, B1, E, 4.5, seed + 3, 0.05);
    [1360, 1444, 1466, 1555, 1577, 1666, 1688].forEach(function (x) {
      rect('bright', x, HI(i), 2, 13);
    });
  }
  var dqs = [[265, 266], [269, 270], [281, 282], [299, 300], [302, 303], [305, 306], [308, 309], [311, 312], [316, 320], [328, 331], [355, 356], [391, 395], [404, 407]];
  dataRow(10, 61, [[265, 266], [318, 319], [328, 331], [355, 356], [391, 395], [404, 407]]);
  dataRow(11, 65, dqs);
  dataRow(12, 69, dqs);

  rect('z', 264, HI(14) + 6, E - 264, 1);
  marks(14, [[267, 269], [328, 330], [355, 356], [391, 393]]);
  function dmBlock(x0, x1, seed) {
    teeth(14, x0, x1, seed);
    regular(x0, x1, 4.3).forEach(function (x, k) { if (k % 3) rect('notch', x, HI(14) + 1, 1, 11); });
  }
  dmBlock(A0, A1, 72);
  dmBlock(B0, B1, 73);

  function lbl(i, x, s) {
    texts += '<text x="' + x + '" y="' + (HI(i) + 10.5) + '">' + s + '</text>';
  }
  function lines(i, x0, x1) {
    rect('bright', x0, HI(i), x1 - x0, 1);
    rect('bright', x0, HI(i) + 12, x1 - x0, 1);
  }
  function plainBus(i, s) { lines(i, 264, E); lbl(i, 268, s); }
  plainBus(22, '0');
  plainBus(24, '0f');
  plainBus(27, '00000000');
  plainBus(32, '1');
  plainBus(34, '0f');
  plainBus(39, '000000');

  function busRow(i, l1, l2, l3, l2x) {
    lines(i, 264, A0);
    lines(i, A1, B0);
    lines(i, B1, E);
    busyBand(i, A0, A1);
    busyBand(i, B0, B1);
    lbl(i, 268, l1);
    lbl(i, l2x, l2);
    lbl(i, 823, l3);
  }
  function denseBus(seed, pA, pB) {
    return trans(seed, A0 + 2, A1, pA, pB).concat(trans(seed + 1, B0 + 2, B1, pA, pB));
  }
  function busCentre(i, list) {
    var c = HI(i) + 6;
    [[A0, A1], [B0, B1]].forEach(function (g) {
      var p = g[0];
      list.filter(function (t) { return t >= g[0] && t < g[1]; }).concat([g[1]]).forEach(function (t) {
        if (t - p > 5) rect('notch', p + 2, c, t - p - 3, 1);
        p = t;
      });
    });
  }
  function edges(i, list) {
    list.forEach(function (t) {
      rect('notch', t - 1, HI(i), 1, 2);
      rect('notch', t - 1, HI(i) + 11, 1, 2);
    });
  }
  function ticksFor(i, l) {
    l.forEach(function (t) { rect('notch', t, HI(i) + 2, 1, 9); });
    busCentre(i, l);
  }
  function denseRow(i, seed, lx) {
    var l = denseBus(seed, 2, 3);
    busRow(i, z7, z7, z7, lx);
    l.forEach(function (t) { rect('notch', t, HI(i) + 3, 1, 3); rect('notch', t, HI(i) + 7, 1, 3); });
    edges(i, l);
  }

  var z7 = '0000000';
  var z20 = new Array(21).join('0') + '...';
  var z13 = new Array(14).join('0') + '...';
  denseRow(23, 81, 567);
  denseRow(33, 83, 568);
  busRow(28, z20, z13, new Array(62).join('0') + 'c80', 566);
  ticksFor(28, denseBus(85, 3, 9));
  busRow(37, z20, z13, new Array(61).join('0') + 'c7f', 566);
  ticksFor(37, denseBus(87, 3, 9));
  busRow(29, '00', '02', '02', 568);
  ticksFor(29, [423, 527, 547, 727, 746]);
  busRow(38, '00', '00', '00', 568);
  ticksFor(38, denseBus(89, 6, 16));

  texts += '<text x="268" y="826">( Region: sim:/tb_ddr3/top_inst/ddr3_top_inst )</text>';

  [1030, 1541].forEach(function (x) { rect('over', x, 114, 1, 741); });

  var ax = '';
  var tick = '';
  for (var k = -4; 390 + 25.6 * k < E; k++) {
    var tx = Math.round(390 + 25.6 * k);
    var major = ((k % 5) + 5) % 5 === 0;
    tick += 'M' + tx + ' ' + (major ? 858 : 861) + 'h1v' + (major ? 7 : 4) + 'h-1z';
  }
  ax += '<text class="ax" x="263" y="879">00 ps</text>';
  [[518, '200,000 ps'], [774, '400,000 ps'], [1030, '600,000 ps'], [1286, '800,000 ps'], [1542, '1,000,000 ps']].forEach(function (a) {
    ax += '<text class="ax" text-anchor="middle" x="' + a[0] + '" y="879">' + a[1] + '</text>';
  });

  var cur = { y: '', o: '', p: '' };
  function cr(c, y, h) { cur[c] += 'M669 ' + y + 'h3v' + h + 'h-3z'; }
  cr('y', 94, 17);
  cr('y', 114, 761);
  [1, 2, 10, 11, 12, 14, 23, 28, 29, 33, 37, 38].forEach(function (i) { cr('p', HI(i), 13); });
  [3, 4, 5, 7, 9, 13, 15, 17, 19, 20, 21, 25, 26, 30, 31, 35, 36].forEach(function (i) { cr('o', HI(i), 13); });
  [16, 40].forEach(function (i) { cr('o', HI(i) + 12, 1); });
  [0, 6, 8, 18, 42, 43].forEach(function (i) { cr('o', HI(i), 1); });
  [22, 24, 27, 32, 34, 39].forEach(function (i) { cr('p', HI(i), 1); cr('p', HI(i) + 12, 1); });

  var html = '';
  order.forEach(function (k) {
    html += '<path d="' + L[k] + '" fill="' + colors[k] + '"' + (k === 'over' ? ' opacity=".55"' : '') + '/>';
  });
  html += texts + ax;
  html += '<path d="' + tick + '" fill="#008000"/>';
  html += '<path d="' + cur.y + '" fill="#ffd000"/><path d="' + cur.o + '" fill="#ff5a00"/><path d="' + cur.p + '" fill="#5028b0"/>';
  html += '<path d="M260 111h1494v1H260z" fill="#d0d0d0"/><path d="M260 112h1494v2H260z" fill="#f4f4f4"/>';
  html += '<path d="M260 855h1494v1H260z" fill="#c8c8c8"/><path d="M260 856h1494v2H260z" fill="#fff"/>';
  svg.innerHTML = html;
})();
```
